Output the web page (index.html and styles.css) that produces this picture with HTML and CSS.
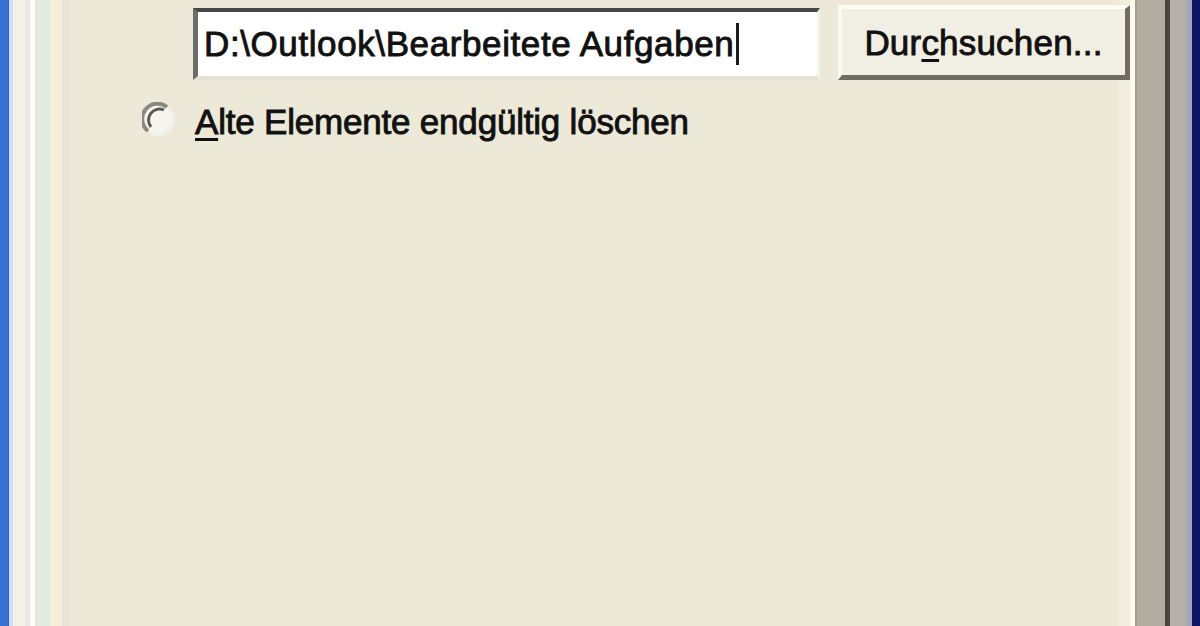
FILE: index.html
```html
<!DOCTYPE html>
<html lang="de">
<head>
<meta charset="utf-8">
<title>Elemente verschieben</title>
<link rel="stylesheet" href="styles.css">
</head>
<body>
<div class="window">
  <div class="frame-left"></div>
  <div class="content">
    <div class="path-row">
      <div class="textbox"><span class="path">D:\Outlook\Bearbeitete Aufgaben</span><span class="caret"></span></div>
      <button class="btn" type="button">Dur<u>c</u>hsuchen...</button>
    </div>
    <label class="radio-row">
      <svg class="radio" width="34" height="36" viewBox="0 0 34 36" aria-hidden="true">
        <circle cx="17" cy="18" r="15" fill="#f6f5ef"/>
        <path d="M6 29 A15 15 0 0 1 25 5" fill="none" stroke="#8a8880" stroke-width="4"/>
        <path d="M9 25 A11 11 0 0 1 22 8" fill="none" stroke="#5c5a54" stroke-width="3"/>
        <path d="M28 9 A15 15 0 0 1 9 31" fill="none" stroke="#f2f1ea" stroke-width="4"/>
      </svg>
      <span class="radio-label"><u>A</u>lte Elemente endgültig löschen</span>
    </label>
  </div>
  <div class="frame-right"></div>
</div>
</body>
</html>
```

FILE: styles.css
```css
html, body {
  margin: 0;
  padding: 0;
  width: 1200px;
  height: 626px;
  overflow: hidden;
  background: #ece9d8;
}

.window {
  display: flex;
  width: 1200px;
  height: 626px;
  font-family: "Liberation Sans", Arial, sans-serif;
  font-size: 35px;
  color: #111;
  -webkit-text-stroke: 0.9px #111;
}

.frame-left {
  width: 70px;
  flex: none;
  background: linear-gradient(to right,
    #3574d6 0, #3574d6 8px,
    #3f62b0 8px, #3f62b0 9px,
    #d3def4 9px, #d3def4 13px,
    #f3f2ea 13px, #f3f2ea 25px,
    #eae8e2 25px, #eae8e2 30px,
    #ffffff 30px, #ffffff 35px,
    #efe3e3 35px, #efe3e3 37px,
    #e3ece1 37px, #e3ece1 50px,
    #f5eed9 50px, #f5eed9 62px,
    #ebe2d8 62px, #ebe2d8 70px);
}

.frame-right {
  width: 70px;
  flex: none;
  background: linear-gradient(to right,
    #fdfbe7 0, #fdfbe7 5px,
    #a29e92 5px, #a29e92 7px,
    #b2ada0 7px, #b2ada0 35px,
    #4a463d 35px, #4a463d 40px,
    #b5afa7 40px, #b5afa7 57px,
    #9fa5bf 57px, #9fa5bf 62px,
    #0b1566 62px, #0b1566 70px);
}

.content {
  flex: 1;
  background: linear-gradient(to right, #ece9d8 calc(100% - 12px), #f0eddf calc(100% - 12px));
  padding-top: 5px;
}

.path-row {
  display: flex;
  align-items: flex-end;
  gap: 18px;
  margin-left: 123px;
}

.textbox {
  box-sizing: border-box;
  width: 627px;
  height: 72px;
  display: flex;
  align-items: center;
  padding-left: 6px;
  background: #ffffff;
  border-top: 4px solid #464646;
  border-left: 5px solid #6c6c6a;
  border-right: 3px solid #f5f3ea;
  border-bottom: 4px solid #e4e2d8;
}

.path {
  white-space: nowrap;
  line-height: 1;
  margin-top: -2px;
  letter-spacing: 0.6px;
}

.caret {
  width: 3px;
  height: 42px;
  margin-left: 2px;
  background: #1c1c1c;
}

.btn {
  box-sizing: border-box;
  width: 292px;
  height: 75px;
  padding: 0;
  font: inherit;
  color: inherit;
  background: #f1efe4;
  border-top: 4px solid #fdfcf4;
  border-left: 4px solid #fbfaf2;
  border-right: 5px solid #6e6b60;
  border-bottom: 5px solid #6e6b60;
  line-height: 1;
  letter-spacing: 0.2px;
}

.btn u, .radio-label u {
  text-decoration-thickness: 3px;
  text-underline-offset: 4px;
}

.radio-row {
  display: flex;
  align-items: center;
  gap: 19px;
  margin-top: 20px;
  margin-left: 72px;
}

.radio {
  flex: none;
  display: block;
}

.radio-label {
  white-space: nowrap;
  line-height: 1;
  margin-top: 4px;
  letter-spacing: -0.2px;
}
```
